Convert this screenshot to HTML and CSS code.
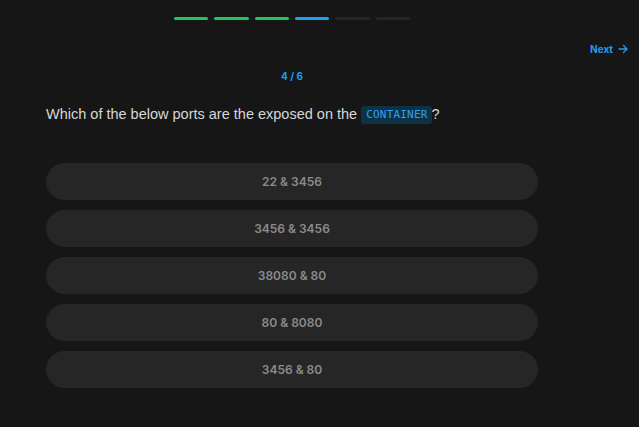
FILE: index.html
```html
<!DOCTYPE html>
<html>
<head>
<meta charset="utf-8">
<link rel="stylesheet" href="styles.css">
</head>
<body>
<div class="page">
  <div class="column">
    <div class="progress">
      <span class="seg done"></span>
      <span class="seg done"></span>
      <span class="seg done"></span>
      <span class="seg current"></span>
      <span class="seg"></span>
      <span class="seg"></span>
    </div>
  </div>
  <div class="next-row">
    <a class="next">Next
      <svg width="10" height="10" viewBox="0 0 10 10"><path d="M1 5H9M5.5 1.5L9 5L5.5 8.5" fill="none" stroke="currentColor" stroke-width="1.3" stroke-linecap="round" stroke-linejoin="round"/></svg>
    </a>
  </div>
  <div class="column">
    <div class="counter">4 / 6</div>
    <p class="question">Which of the below ports are the exposed on the <code class="code">CONTAINER</code>?</p>
    <div class="options">
      <button class="option">22 &amp; 3456</button>
      <button class="option">3456 &amp; 3456</button>
      <button class="option">38080 &amp; 80</button>
      <button class="option">80 &amp; 8080</button>
      <button class="option">3456 &amp; 80</button>
    </div>
  </div>
</div>
</body>
</html>
```
FILE: styles.css
```css
html, body {
  margin: 0;
  background: #161616;
}
body {
  font-family: Inter, "Liberation Sans", sans-serif;
  width: 639px;
  height: 427px;
  overflow: hidden;
}
.page {
  padding-top: 17px;
}
.column {
  width: 492px;
  margin-left: 46px;
}
.progress {
  display: flex;
  gap: 6px;
  width: 236px;
  margin: 0 auto;
}
.seg {
  flex: 1;
  height: 3px;
  border-radius: 2px;
  background: #262626;
}
.seg.done { background: #22c55e; }
.seg.current { background: #1ea1f2; }
.next-row {
  display: flex;
  justify-content: flex-end;
  padding-right: 11px;
  margin-top: 22px;
}
.next {
  display: flex;
  align-items: center;
  gap: 5px;
  color: #1e9df0;
  font-size: 10px;
  font-weight: 700;
  line-height: 14px;
}
.counter {
  margin-top: 13px;
  text-align: center;
  color: #1e9df0;
  font-size: 10px;
  font-weight: 700;
  line-height: 14px;
}
.question {
  margin: 21px 0 0;
  font-family: "Liberation Sans", Arial, sans-serif;
  font-size: 14.5px;
  line-height: 20px;
  color: #d6d6d6;
}
.code {
  display: inline-block;
  font-family: "DejaVu Sans Mono", "Liberation Mono", monospace;
  font-size: 11px;
  letter-spacing: 0.2px;
  line-height: 18px;
  padding: 0 4px 0 5px;
  border-radius: 3px;
  background: #0d3247;
  color: #2ea2ee;
  vertical-align: 1px;
}
.options {
  margin-top: 39px;
  display: flex;
  flex-direction: column;
  gap: 10px;
}
.option {
  height: 37px;
  border: 0;
  border-radius: 19px;
  background: #262626;
  color: #8b8b8b;
  font-family: Inter, "Liberation Sans", sans-serif;
  font-size: 12px;
  font-weight: 600;
  padding: 0;
}
```
